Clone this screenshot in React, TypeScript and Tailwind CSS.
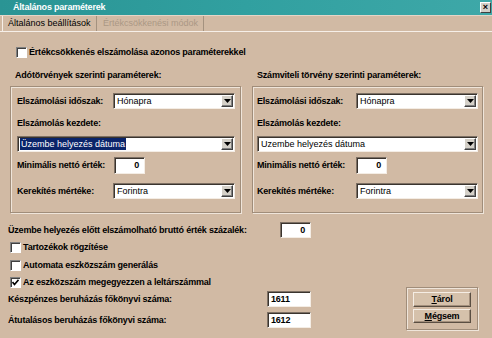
import React from "react";

const LBL = "text-[9px] font-bold tracking-[-0.2px] leading-none whitespace-nowrap text-black";
const SUNKEN =
  "bg-white border border-t-[#7d7064] border-l-[#7d7064] border-b-[#f4ede5] border-r-[#f4ede5] shadow-[inset_1px_1px_0_#3a342e]";
const ETCHED =
  "border border-[#a08d7a] shadow-[inset_1px_1px_0_#efe5da,1px_1px_0_#efe5da]";

function Arrow() {
  return (
    <svg width="7" height="4" viewBox="0 0 7 4">
      <path d="M0 0h7L3.5 4z" fill="#000" />
    </svg>
  );
}

function Select({ cls, text, selected }: { cls: string; text: string; selected?: boolean }) {
  return (
    <div className={`h-[16px] flex items-center ${SUNKEN} ${cls}`}>
      <div className="flex-1 pl-[2px] flex items-center overflow-hidden">
        {selected ? (
          <span className="bg-[#0a246a] text-white text-[9px] leading-[12px] h-[12px] px-[1px] whitespace-nowrap">
            {text}
          </span>
        ) : (
          <span className="text-black text-[9px] leading-none whitespace-nowrap pl-[1px]">{text}</span>
        )}
      </div>
      <div className="w-[12px] h-[12px] mr-[1px] bg-[#d4d0c8] border border-t-white border-l-white border-b-[#404040] border-r-[#404040] shadow-[inset_-1px_-1px_0_#808080] flex items-center justify-center">
        <Arrow />
      </div>
    </div>
  );
}

function Input({ cls, value, right }: { cls: string; value: string; right?: boolean }) {
  return (
    <div
      className={`flex items-center ${right ? "justify-end pr-[5px]" : "justify-start pl-[3px]"} ${SUNKEN} ${cls}`}
    >
      <span className={LBL}>{value}</span>
    </div>
  );
}

function Check({ checked }: { checked?: boolean }) {
  return (
    <div className="w-[11px] h-[11px] bg-white border border-t-[#808080] border-l-[#808080] border-b-white border-r-white shadow-[inset_1px_1px_0_#404040] flex items-center justify-center shrink-0">
      {checked && (
        <svg width="7" height="7" viewBox="0 0 7 7">
          <polyline points="0.5,3 2.5,5.5 6.5,0.8" fill="none" stroke="#000" strokeWidth="1.6" />
        </svg>
      )}
    </div>
  );
}

function Group({ right }: { right?: boolean }) {
  const pl = right ? "pl-[4px]" : "pl-[6px]";
  const lw = right ? "w-[99px]" : "w-[96px]";
  const lw2 = right ? "w-[99px]" : "w-[97px]";
  return (
    <div className={`w-[231px] h-[127px] flex flex-col ${pl} ${ETCHED}`}>
      <div className="mt-[6px] h-[16px] flex items-center">
        <div className={`${lw} ${LBL}`}>Elszámolási időszak:</div>
        <Select cls="w-[122px]" text="Hónapra" />
      </div>
      <div className="mt-[8px] h-[12px] flex items-center">
        <div className={LBL}>Elszámolás kezdete:</div>
      </div>
      <div className="mt-[7px]">
        <Select cls={right ? "w-[221px]" : "w-[218px]"} text="Üzembe helyezés dátuma" selected={!right} />
      </div>
      <div className="mt-[5px] h-[17px] flex items-center">
        <div className={`${lw2} ${LBL}`}>Minimális nettó érték:</div>
        <Input cls="w-[31px] h-[17px]" value="0" right />
      </div>
      <div className="mt-[9px] h-[16px] flex items-center">
        <div className={`${lw} ${LBL}`}>Kerekítés mértéke:</div>
        <Select cls="w-[122px]" text="Forintra" />
      </div>
    </div>
  );
}

function Button({ first, rest, cls }: { first: string; rest: string; cls: string }) {
  return (
    <div
      className={`w-[58px] ${cls} bg-[#d5c1ab] border border-t-[#f5ede4] border-l-[#f5ede4] border-b-[#5a4e42] border-r-[#5a4e42] shadow-[inset_-1px_-1px_0_#a38f7c] flex items-center justify-center`}
    >
      <span className={LBL}>
        <span className="underline">{first}</span>
        {rest}
      </span>
    </div>
  );
}

export default function App() {
  return (
    <div className="w-[492px] h-[338px] bg-[#d1baa4] font-['Liberation_Sans',Arial,sans-serif] flex flex-col overflow-hidden select-none">
      {/* title bar */}
      <div className="h-[15px] shrink-0 bg-gradient-to-r from-[#2a9494] via-[#31a0a0] to-[#3ea8a8] flex items-center pl-[13px] pr-[1px]">
        <span className="text-[9px] font-bold text-white tracking-[-0.2px] leading-none whitespace-nowrap">
          Általános paraméterek
        </span>
        <div className="ml-auto w-[11px] h-[11px] bg-[#d4d0c8] border border-t-white border-l-white border-b-[#404040] border-r-[#404040] flex items-center justify-center">
          <span className="text-[9px] font-bold leading-none text-black">×</span>
        </div>
      </div>

      {/* tabs */}
      <div className="h-[17px] shrink-0 flex border-t border-t-[#e4d6c8] border-b border-b-[#f6efe8]">
        <div className="ml-[2px] w-[94px] border-l border-l-[#f6efe8] flex items-center pl-[5px]">
          <span className="text-[9px] leading-none text-black whitespace-nowrap">Általános beállítások</span>
        </div>
        <div className="w-[108px] border-l border-r border-l-[#a4927f] border-r-[#a4927f] flex items-center pl-[6px]">
          <span className="text-[9px] leading-none text-[#ab9884] whitespace-nowrap">Értékcsökkenési módok</span>
        </div>
      </div>

      {/* top checkbox */}
      <div className="mt-[13px] h-[14px] flex items-center pl-[16px] gap-[2px]">
        <Check />
        <span className={LBL}>Értékcsökkenés elszámolása azonos paraméterekkel</span>
      </div>

      {/* group labels */}
      <div className="mt-[10px] h-[12px] flex items-center pl-[10px] gap-[11px]">
        <div className={`w-[231px] pl-[5px] ${LBL}`}>Adótörvények szerinti paraméterek:</div>
        <div className={`w-[231px] pl-[5px] ${LBL}`}>Számviteli törvény szerinti paraméterek:</div>
      </div>

      {/* groups */}
      <div className="mt-[5px] flex pl-[10px] gap-[11px]">
        <Group />
        <Group right />
      </div>

      {/* bottom */}
      <div className="flex pl-[8px]">
        <div className="w-[303px] flex flex-col">
          <div className="mt-[9px] h-[16px] flex items-center justify-between">
            <span className={LBL}>Üzembe helyezés előtt elszámolható bruttó érték százalék:</span>
            <Input cls="w-[31px] h-[16px]" value="0" right />
          </div>
          <div className="h-[18px] flex items-center pl-[2px] gap-[2px]">
            <Check />
            <span className={LBL}>Tartozékok rögzítése</span>
          </div>
          <div className="h-[18px] flex items-center pl-[2px] gap-[2px]">
            <Check />
            <span className={LBL}>Automata eszközszám generálás</span>
          </div>
          <div className="h-[17px] flex items-center pl-[2px] gap-[2px]">
            <Check checked />
            <span className={LBL}>Az eszközszám megegyezzen a leltárszámmal</span>
          </div>
          <div className="h-[16px] flex items-center justify-between">
            <span className={LBL}>Készpénzes beruházás főkönyvi száma:</span>
            <Input cls="w-[44px] h-[16px]" value="1611" />
          </div>
          <div className="mt-[5px] h-[16px] flex items-center justify-between">
            <span className={LBL}>Átutalásos beruházás főkönyvi száma:</span>
            <Input cls="w-[44px] h-[16px]" value="1612" />
          </div>
        </div>
        <div className={`ml-[95px] mt-[74px] w-[72px] h-[43px] flex flex-col items-center pt-[4px] gap-[2px] ${ETCHED}`}>
          <Button first="T" rest="árol" cls="h-[15px]" />
          <Button first="M" rest="égsem" cls="h-[14px]" />
        </div>
      </div>
    </div>
  );
}
